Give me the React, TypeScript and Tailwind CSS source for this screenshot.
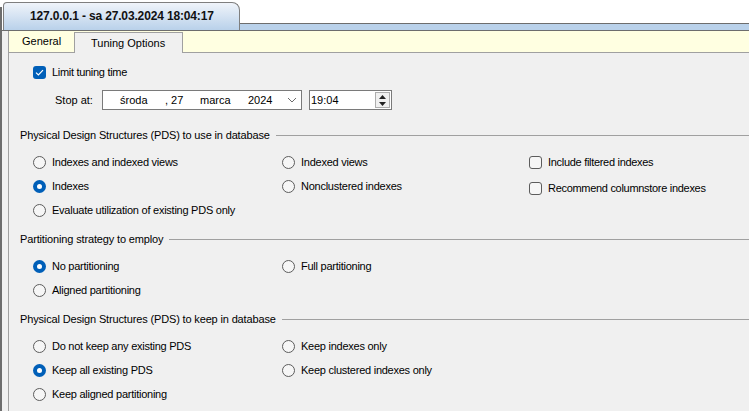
import React from "react";

const font = { fontFamily: '"Liberation Sans", Arial, sans-serif' };

function Radio({ checked, label }: { checked?: boolean; label: string }) {
  return (
    <div className="flex items-center gap-[6px] h-[24px]">
      {checked ? (
        <span className="w-[13px] h-[13px] rounded-full bg-[#005fb8] flex items-center justify-center">
          <span className="w-[5px] h-[5px] rounded-full bg-white" />
        </span>
      ) : (
        <span className="w-[13px] h-[13px] rounded-full border border-[#5c5c5c] bg-[#f6f6f6]" />
      )}
      <span className="tracking-[-0.25px]">{label}</span>
    </div>
  );
}

function Check({ checked, label }: { checked?: boolean; label: string }) {
  return (
    <div className="flex items-center gap-[6px] h-[24px]">
      {checked ? (
        <span className="w-[13px] h-[13px] rounded-[3px] bg-[#005fb8] flex items-center justify-center">
          <svg width="9" height="7" viewBox="0 0 9 7" fill="none">
            <path d="M1 3.6 L3.4 6 L8 1.2" stroke="white" strokeWidth="1.2" />
          </svg>
        </span>
      ) : (
        <span className="w-[13px] h-[13px] rounded-[3px] border border-[#5c5c5c] bg-[#f6f6f6]" />
      )}
      <span className="tracking-[-0.3px]">{label}</span>
    </div>
  );
}

function Header({ text }: { text: string }) {
  return (
    <div className="flex items-center h-[14px]">
      <span className="tracking-[-0.15px] whitespace-nowrap">{text}</span>
      <div className="flex-1 h-px bg-[#a0a0a0] ml-[6px]" />
    </div>
  );
}

export default function App() {
  return (
    <div style={font} className="w-[749px] h-[411px] overflow-hidden bg-white text-[11px] text-black flex flex-col">
      {/* outer tab strip */}
      <div className="flex h-[30px]">
        <div className="w-[2px] mt-[7px] bg-[#6d6d6d]" />
        <div className="ml-[1px] mt-[2px] w-[237px] rounded-tl-[4px] rounded-tr-[8px] border border-b-0 border-[#7f7f7f] bg-linear-to-b from-[#f0f4fa] to-[#b9d1ea] pl-[26px] pt-[4px]">
          <span className="text-[12px] font-bold tracking-[-0.15px] text-[#111]">
            127.0.0.1 - sa 27.03.2024 18:04:17
          </span>
        </div>
        <div className="flex-1 flex flex-col">
          <div className="mt-auto h-[7px] border-t border-[#6d6d6d] bg-[#b9d1ea]" />
        </div>
      </div>

      {/* body */}
      <div className="flex-1 flex flex-col border-t border-[#6d6d6d] border-l-2 border-l-[#6d6d6d] bg-[#f0f0f0] pl-[6px]">
        <div className="flex-1 flex flex-col border-l border-[#a0a0a0]">
          {/* inner tabs */}
          <div className="h-[22px] flex items-end border-b border-[#a0a0a0] bg-[#ffffe1]">
            <div className="w-[65px] h-[21px] flex items-center pl-[13px]">General</div>
            <div className="w-[109px] h-[21px] -mb-px flex items-center pl-[16px] bg-[#f0f0f0] border border-b-0 border-[#a0a0a0]">
              Tuning Options
            </div>
          </div>

          {/* content */}
          <div className="flex-1 flex flex-col pl-[11px]">
            <div className="mt-[11px] ml-[13px] h-[16px] flex items-center">
              <Check checked label="Limit tuning time" />
            </div>

            <div className="mt-[10px] ml-[35px] h-[20px] flex items-center">
              <span className="w-[47px]">Stop at:</span>
              <div className="w-[200px] h-[20px] border border-[#7a7a7a] bg-white flex items-center pl-[17px]">
                <span className="w-[45px]">środa</span>
                <span className="w-[35px]">, 27</span>
                <span className="w-[48px]">marca</span>
                <span>2024</span>
                <svg className="ml-auto mr-[4px]" width="10" height="6" viewBox="0 0 10 6" fill="none">
                  <path d="M1 1 L5 5 L9 1" stroke="#6b6b6b" strokeWidth="1" />
                </svg>
              </div>
              <div className="ml-[7px] w-[83px] h-[20px] border border-[#7a7a7a] bg-white flex items-center pl-[1px]">
                <span>19:04</span>
                <div className="ml-auto mr-[1px] w-[15px] h-[16px] border border-[#adadad] bg-[#f0f0f0] flex flex-col items-center justify-center gap-[3px]">
                  <svg width="7" height="4" viewBox="0 0 7 4"><path d="M0 4 L3.5 0 L7 4 Z" fill="#222" /></svg>
                  <svg width="7" height="4" viewBox="0 0 7 4"><path d="M0 0 L3.5 4 L7 0 Z" fill="#222" /></svg>
                </div>
              </div>
            </div>

            <div className="mt-[18px]">
              <Header text="Physical Design Structures (PDS) to use in database" />
            </div>
            <div className="mt-[8px] ml-[13px] flex">
              <div className="w-[249px] flex flex-col">
                <Radio label="Indexes and indexed views" />
                <Radio checked label="Indexes" />
                <Radio label="Evaluate utilization of existing PDS only" />
              </div>
              <div className="w-[247px] flex flex-col">
                <Radio label="Indexed views" />
                <Radio label="Nonclustered indexes" />
              </div>
              <div className="flex flex-col gap-[2px]">
                <Check label="Include filtered indexes" />
                <Check label="Recommend columnstore indexes" />
              </div>
            </div>

            <div className="mt-[10px]">
              <Header text="Partitioning strategy to employ" />
            </div>
            <div className="mt-[8px] ml-[13px] flex">
              <div className="w-[249px] flex flex-col">
                <Radio checked label="No partitioning" />
                <Radio label="Aligned partitioning" />
              </div>
              <div className="flex flex-col">
                <Radio label="Full partitioning" />
              </div>
            </div>

            <div className="mt-[10px]">
              <Header text="Physical Design Structures (PDS) to keep in database" />
            </div>
            <div className="mt-[8px] ml-[13px] flex">
              <div className="w-[249px] flex flex-col">
                <Radio label="Do not keep any existing PDS" />
                <Radio checked label="Keep all existing PDS" />
                <Radio label="Keep aligned partitioning" />
              </div>
              <div className="flex flex-col">
                <Radio label="Keep indexes only" />
                <Radio label="Keep clustered indexes only" />
              </div>
            </div>
          </div>
        </div>
      </div>
    </div>
  );
}
